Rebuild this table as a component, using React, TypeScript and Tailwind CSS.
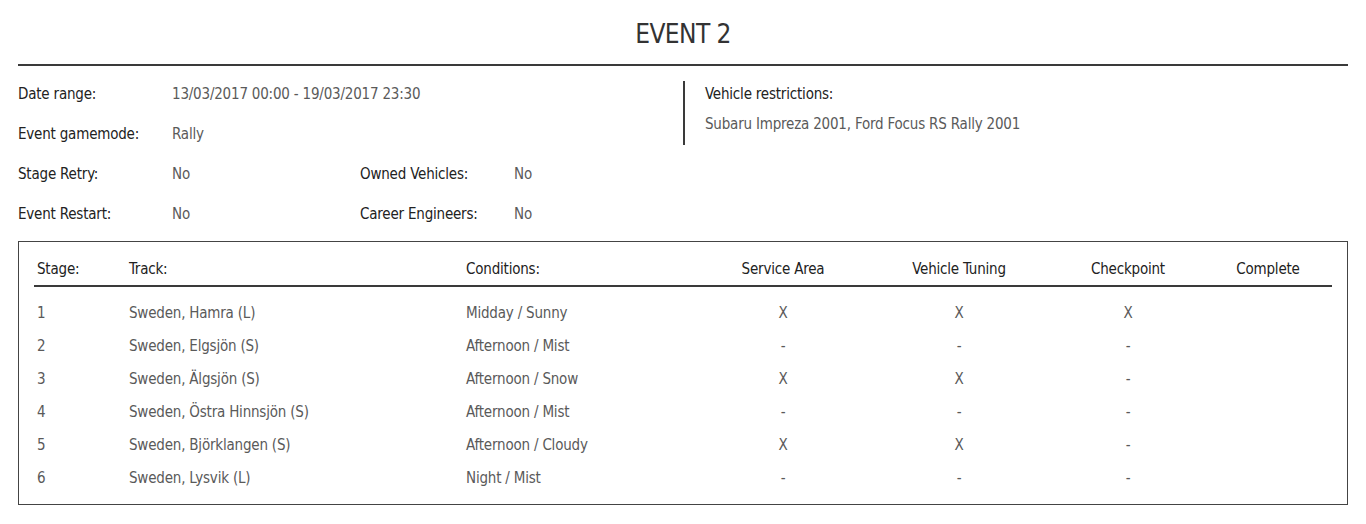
const stages = [
  { n: "1", track: "Sweden, Hamra (L)", cond: "Midday / Sunny", service: "X", tuning: "X", check: "X" },
  { n: "2", track: "Sweden, Elgsjön (S)", cond: "Afternoon / Mist", service: "-", tuning: "-", check: "-" },
  { n: "3", track: "Sweden, Älgsjön (S)", cond: "Afternoon / Snow", service: "X", tuning: "X", check: "-" },
  { n: "4", track: "Sweden, Östra Hinnsjön (S)", cond: "Afternoon / Mist", service: "-", tuning: "-", check: "-" },
  { n: "5", track: "Sweden, Björklangen (S)", cond: "Afternoon / Cloudy", service: "X", tuning: "X", check: "-" },
  { n: "6", track: "Sweden, Lysvik (L)", cond: "Night / Mist", service: "-", tuning: "-", check: "-" },
];

const cols = "grid grid-cols-[92px_337px_237px_166px_186px_152px_1fr]";

const App = () => {
  return (
    <div
      className="bg-white px-[18px] text-[15px] tracking-[-0.2px] text-[#222]"
      style={{ fontFamily: '"DejaVu Sans Condensed", "Liberation Sans", sans-serif' }}
    >
      {/* title */}
      <div className="h-[66px] pt-[4px] flex items-center justify-center border-b-2 border-[#3a3a3a]">
        <h1 className="text-[26px] tracking-[-0.6px] text-[#333]">EVENT 2</h1>
      </div>

      {/* event info */}
      <div className="mt-[7px] grid grid-cols-[154px_188px_154px_169px_1fr] grid-rows-[40px_40px_40px_40px]">
        <div className="flex items-center pt-[2px]">Date range:</div>
        <div className="col-span-3 flex items-center pt-[2px] text-[#5a5a5a]">13/03/2017 00:00 - 19/03/2017 23:30</div>
        <div className="row-span-2 pt-[8px]">
          <div className="h-[64px] border-l-2 border-[#3a3a3a] pl-[20px]">
            <div className="pt-[1px] leading-[24px]">Vehicle restrictions:</div>
            <div className="mt-[6px] leading-[24px] text-[#5a5a5a]">Subaru Impreza 2001, Ford Focus RS Rally 2001</div>
          </div>
        </div>

        <div className="flex items-center pt-[2px]">Event gamemode:</div>
        <div className="col-span-3 flex items-center pt-[2px] text-[#5a5a5a]">Rally</div>

        <div className="flex items-center pt-[2px]">Stage Retry:</div>
        <div className="flex items-center pt-[2px] text-[#5a5a5a]">No</div>
        <div className="flex items-center pt-[2px]">Owned Vehicles:</div>
        <div className="flex items-center pt-[2px] text-[#5a5a5a]">No</div>
        <div />

        <div className="flex items-center pt-[2px]">Event Restart:</div>
        <div className="flex items-center pt-[2px] text-[#5a5a5a]">No</div>
        <div className="flex items-center pt-[2px]">Career Engineers:</div>
        <div className="flex items-center pt-[2px] text-[#5a5a5a]">No</div>
        <div />
      </div>

      {/* stages table */}
      <div className="mt-[8px] border border-[#444] px-[15px] pt-[8px] pb-[9px]">
        <div className={`${cols} h-[37px] items-center border-b-2 border-[#3a3a3a] pt-[3px]`}>
          <div className="pl-[3px]">Stage:</div>
          <div className="pl-[3px]">Track:</div>
          <div className="pl-[3px]">Conditions:</div>
          <div className="text-center">Service Area</div>
          <div className="text-center">Vehicle Tuning</div>
          <div className="text-center">Checkpoint</div>
          <div className="text-center">Complete</div>
        </div>
        <div className="pt-[10px] text-[#5a5a5a]">
          {stages.map((s) => (
            <div key={s.n} className={`${cols} h-[33px] items-center`}>
              <div className="pl-[3px]">{s.n}</div>
              <div className="pl-[3px]">{s.track}</div>
              <div className="pl-[3px]">{s.cond}</div>
              <div className="text-center">{s.service}</div>
              <div className="text-center">{s.tuning}</div>
              <div className="text-center">{s.check}</div>
              <div className="text-center" />
            </div>
          ))}
        </div>
      </div>
    </div>
  );
};

export default App;
